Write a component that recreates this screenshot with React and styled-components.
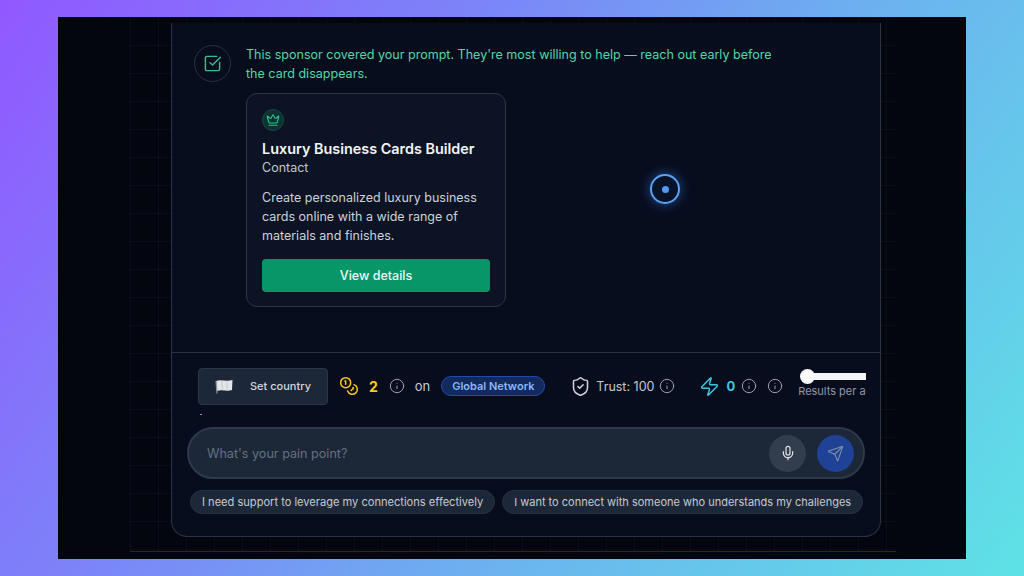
import React from "react";
import styled, { createGlobalStyle } from "styled-components";
import { SquareCheckBig, Crown, Info, ShieldCheck, Zap, Mic, Send, Coins } from "lucide-react";

const GlobalStyle = createGlobalStyle`
  html, body {
    margin: 0;
    padding: 0;
    height: 576px;
    overflow: hidden;
  }
  * {
    box-sizing: border-box;
  }
`;

const Page = styled.div`
  width: 1024px;
  height: 576px;
  padding: 17px 58px;
  background: linear-gradient(125deg, #9158ff 0%, #7b86f8 35%, #6cb2ef 62%, #5ee2e6 100%);
  font-family: Inter, "Liberation Sans", sans-serif;
`;

const Screen = styled.div`
  position: relative;
  width: 908px;
  height: 542px;
  padding: 6px 85px 23px 113px;
  background-color: #04060f;

  /* faint grid behind the panel */
  &::before {
    content: "";
    position: absolute;
    top: 0;
    bottom: 8px;
    left: 72px;
    right: 70px;
    background-image:
      linear-gradient(rgba(70, 90, 130, 0.09) 1px, transparent 1px),
      linear-gradient(90deg, rgba(70, 90, 130, 0.09) 1px, transparent 1px);
    background-size: 28px 28px;
  }

  &::after {
    content: "";
    position: absolute;
    top: 534px;
    left: 72px;
    right: 70px;
    height: 1px;
    background: rgba(110, 90, 50, 0.4);
  }
`;

const Panel = styled.div`
  position: relative;
  z-index: 1;
  display: flex;
  flex-direction: column;
  width: 710px;
  height: 514px;
  background: #080d1e;
  border: 1px solid #2a3444;
  border-top: none;
  border-radius: 0 0 16px 16px;
`;

const Chat = styled.div`
  display: flex;
  gap: 15px;
  height: 330px;
  padding: 22px 22px 0;
  border-bottom: 1px solid #273140;
`;

const Avatar = styled.div`
  display: flex;
  align-items: center;
  justify-content: center;
  flex: none;
  width: 37px;
  height: 37px;
  border-radius: 50%;
  border: 1px solid #243341;
  color: #34c08d;
`;

const Message = styled.div`
  display: flex;
  flex-direction: column;
  gap: 10px;
`;

const Lead = styled.p`
  margin: 0;
  width: 540px;
  color: #52d8a6;
  font-size: 12.55px;
  line-height: 19px;
`;

const Card = styled.div`
  width: 260px;
  height: 214px;
  padding: 15px;
  background: #0c1324;
  border: 1px solid #2c3644;
  border-radius: 11px;
`;

const Badge = styled.div`
  display: flex;
  align-items: center;
  justify-content: center;
  width: 22px;
  height: 22px;
  border-radius: 50%;
  background: #0c3130;
  border: 1px solid #164c43;
  color: #2fc48d;
`;

const CardTitle = styled.h3`
  margin: 8px 0 0;
  color: #f3f5f8;
  font-size: 14.4px;
  font-weight: 600;
  line-height: 20px;
`;

const CardSub = styled.div`
  color: #c2c7cf;
  font-size: 12.5px;
  line-height: 18px;
`;

const CardText = styled.p`
  margin: 11px 0 0;
  color: #cdd2d9;
  font-size: 12.5px;
  line-height: 19px;
`;

const ViewButton = styled.button`
  display: block;
  width: 100%;
  height: 33px;
  margin-top: 14px;
  background: #089668;
  border: none;
  border-radius: 4px;
  color: #eef8f4;
  font-family: inherit;
  font-size: 12.5px;
  font-weight: 500;
`;

const Pulse = styled.div`
  position: absolute;
  z-index: 2;
  left: 592px;
  top: 157px;
  display: flex;
  align-items: center;
  justify-content: center;
  width: 30px;
  height: 30px;
  border-radius: 50%;
  background: #0a1228;
  border: 2px solid #5aa2f2;
  box-shadow: 0 0 12px rgba(59, 130, 246, 0.55);

  &::after {
    content: "";
    width: 7px;
    height: 7px;
    border-radius: 50%;
    background: #4f9bf5;
  }
`;

const Footer = styled.div`
  flex: 1;
  padding: 14px 15px 0 15px;
`;

const StatusBar = styled.div`
  display: flex;
  align-items: center;
  height: 38px;
  padding-left: 11px;
  white-space: nowrap;
`;

const CountryButton = styled.button`
  display: flex;
  align-items: center;
  gap: 16px;
  flex: none;
  width: 130px;
  height: 37px;
  padding: 0 0 0 15px;
  background: #1c2737;
  border: 1px solid #2b3748;
  border-radius: 4px;
  color: #d3d7dd;
  font-family: inherit;
  font-size: 11px;
  font-weight: 500;
`;

const Stat = styled.div`
  display: flex;
  align-items: center;
  flex: none;
  gap: ${(props) => props.$gap || 6}px;
  margin-left: ${(props) => props.$left || 0}px;
  color: ${(props) => props.$color || "#c4c9d1"};
  font-size: ${(props) => props.$size || 12.5}px;
  font-weight: ${(props) => props.$weight || 400};
`;

const InfoIcon = styled(Info)`
  flex: none;
  color: #9aa1ac;
`;

const NetworkPill = styled.span`
  display: inline-flex;
  align-items: center;
  justify-content: center;
  flex: none;
  width: 104px;
  height: 20px;
  margin-left: 11px;
  background: #14295e;
  border: 1px solid #1e4bb0;
  border-radius: 10px;
  color: #8ab8f5;
  font-size: 11px;
  font-weight: 600;
`;

const SliderBox = styled.div`
  display: flex;
  flex-direction: column;
  flex: none;
  width: 68px;
  margin-left: 15px;
  margin-top: -5px;
`;

const SliderTrack = styled.div`
  position: relative;
  height: 7px;
  margin: 4px 0 5px 11px;
  background: #f5f6f8;

  &::before {
    content: "";
    position: absolute;
    left: -9px;
    top: -4px;
    width: 15px;
    height: 15px;
    border-radius: 50%;
    background: #fff;
  }
`;

const SliderLabel = styled.div`
  color: #8f98a6;
  font-size: 11px;
  line-height: 13px;
  white-space: nowrap;
  overflow: hidden;
`;

const Dot = styled.div`
  width: 2px;
  height: 1px;
  margin: 9px 0 0 13px;
  background: #8f98a6;
`;

const InputBar = styled.div`
  display: flex;
  align-items: center;
  gap: 11px;
  height: 52px;
  margin-top: 12px;
  padding: 0 9px 0 18px;
  background: #1c2738;
  border: 2px solid #2d3a4c;
  border-radius: 26px;
`;

const Placeholder = styled.div`
  flex: 1;
  color: #667081;
  font-size: 12.6px;
`;

const RoundButton = styled.div`
  display: flex;
  align-items: center;
  justify-content: center;
  width: 37px;
  height: 37px;
  border-radius: 50%;
  background: ${(props) => (props.$primary ? "#1f4196" : "#323d4d")};
  color: ${(props) => (props.$primary ? "#7f8ea8" : "#e3e6ea")};
`;

const Chips = styled.div`
  display: flex;
  gap: 7px;
  margin: 11px 0 0 3px;
`;

const Chip = styled.div`
  height: 24px;
  padding: 0 11px;
  background: #1c2738;
  border: 1px solid #263244;
  border-radius: 12px;
  color: #c6cad1;
  font-size: ${(props) => props.$size || 11}px;
  line-height: 22px;
  white-space: nowrap;
`;

const FlagIcon = () => (
  <svg width="20" height="15" viewBox="0 0 20 15">
    <path d="M2 2 C7 0 12 3 18.500 1 L18 11 C13 13 8 10 3 12 Z" fill="#e4e5e7" />
    <path d="M2 2 L3 14.500" stroke="#8d9097" strokeWidth="1.200" fill="none" />
    <path d="M8 2 L8.500 11 M13 2.500 L13 11.500" stroke="#cfd1d5" strokeWidth="1.500" fill="none" />
  </svg>
);

const App = () => {
  return (
    <Page>
      <GlobalStyle />
      <Screen>
        <Panel>
          <Chat>
            <Avatar>
              <SquareCheckBig size={19} strokeWidth={1.8} />
            </Avatar>
            <Message>
              <Lead>
                This sponsor covered your prompt. They're most willing to help — reach out early
                before the card disappears.
              </Lead>
              <Card>
                <Badge>
                  <Crown size={14} strokeWidth={1.8} />
                </Badge>
                <CardTitle>Luxury Business Cards Builder</CardTitle>
                <CardSub>Contact</CardSub>
                <CardText>
                  Create personalized luxury business cards online with a wide range of materials
                  and finishes.
                </CardText>
                <ViewButton>View details</ViewButton>
              </Card>
            </Message>
          </Chat>
          <Footer>
            <StatusBar>
              <CountryButton>
                <FlagIcon />
                Set country
              </CountryButton>
              <Stat $left={11} $gap={10} $color="#facc15" $size={14} $weight={700}>
                <Coins size={20} strokeWidth={1.8} />
                2
              </Stat>
              <Stat $left={11}>
                <InfoIcon size={16} strokeWidth={1.5} />
              </Stat>
              <Stat $left={10} $size={13}>on</Stat>
              <NetworkPill>Global Network</NetworkPill>
              <Stat $left={25} $gap={5}>
                <ShieldCheck size={21} strokeWidth={1.7} color="#d5d8dd" />
                Trust: 100
                <InfoIcon size={16} strokeWidth={1.5} />
              </Stat>
              <Stat $left={24} $gap={6} $color="#3fc5df" $size={13} $weight={700}>
                <Zap size={21} strokeWidth={1.7} />
                0
                <InfoIcon size={16} strokeWidth={1.5} />
              </Stat>
              <Stat $left={10}>
                <InfoIcon size={16} strokeWidth={1.5} />
              </Stat>
              <SliderBox>
                <SliderTrack />
                <SliderLabel>Results per a</SliderLabel>
              </SliderBox>
            </StatusBar>
            <Dot />
            <InputBar>
              <Placeholder>What's your pain point?</Placeholder>
              <RoundButton>
                <Mic size={16} strokeWidth={1.8} />
              </RoundButton>
              <RoundButton $primary>
                <Send size={17} strokeWidth={1.6} />
              </RoundButton>
            </InputBar>
            <Chips>
              <Chip $size={11.08}>I need support to leverage my connections effectively</Chip>
              <Chip>I want to connect with someone who understands my challenges</Chip>
            </Chips>
          </Footer>
        </Panel>
        <Pulse />
      </Screen>
    </Page>
  );
};

export default App;
